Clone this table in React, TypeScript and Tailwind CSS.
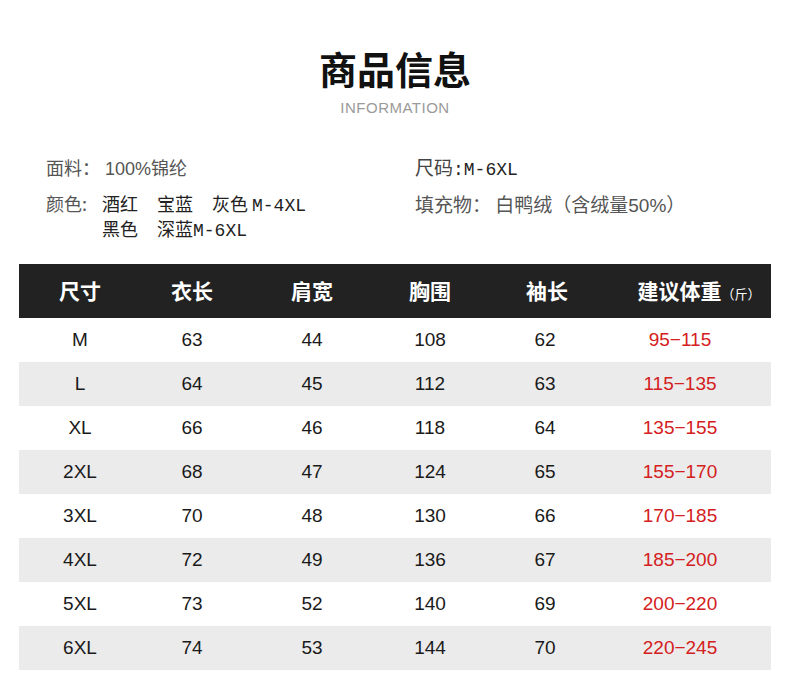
const rows = [
  ['M', '63', '44', '108', '62', '95−115'],
  ['L', '64', '45', '112', '63', '115−135'],
  ['XL', '66', '46', '118', '64', '135−155'],
  ['2XL', '68', '47', '124', '65', '155−170'],
  ['3XL', '70', '48', '130', '66', '170−185'],
  ['4XL', '72', '49', '136', '67', '185−200'],
  ['5XL', '73', '52', '140', '69', '200−220'],
  ['6XL', '74', '53', '144', '70', '220−245'],
];

const cols = 'grid grid-cols-[122px_102px_138px_98px_136px_156px]';
const cjk = "font-['Noto_Sans_CJK_SC',sans-serif]";
const mono = "font-['Liberation_Mono','Noto_Sans_CJK_SC',monospace]";

function Gap() {
  return <span className="inline-block w-[19px]" />;
}

export default function App() {
  return (
    <div className="w-[790px] h-[687px] bg-white overflow-hidden">
      <h1 className={`mt-[49px] h-[38px] text-center text-[38px] leading-[38px] font-bold text-[#111] ${cjk}`}>
        商品信息
      </h1>
      <p className="mt-[13px] text-center text-[15px] leading-[15px] tracking-[0.5px] text-[#9a9a9a] font-['Liberation_Sans',sans-serif]">
        INFORMATION
      </p>

      <div className={`mt-[40px] h-[109px] grid grid-cols-[369px_1fr] content-start pl-[46px] ${cjk}`}>
        <div className="h-[24px] text-[18px] leading-[24px] text-[#555]">
          面料：<span className="font-['Liberation_Sans','Noto_Sans_CJK_SC',sans-serif]"> 100%</span>锦纶
        </div>
        <div className="h-[24px] text-[19px] leading-[24px] text-[#444]">
          尺码<span className={`${mono} text-[#222] text-[18px]`}>:M-6XL</span>
        </div>

        <div className="mt-[12px] flex text-[18px]">
          <span className="w-[56px] h-[25px] leading-[25px] text-[#555]">颜色:</span>
          <div className="text-[#222]">
            <div className="h-[25px] leading-[25px]">
              酒红<Gap />宝蓝<Gap />灰色<span className={`${mono} ml-[4px]`}>M-4XL</span>
            </div>
            <div className="h-[25px] leading-[25px]">
              黑色<Gap />深蓝<span className={mono}>M-6XL</span>
            </div>
          </div>
        </div>
        <div className="mt-[12px] h-[25px] text-[19px] leading-[25px] text-[#555]">
          填充物： 白鸭绒（含绒量<span className="font-['Liberation_Sans',sans-serif]">50%</span>）
        </div>
      </div>

      <div className="ml-[19px] w-[752px]">
        <div className={`${cols} h-[54px] items-center bg-[#222] text-white text-[21px] font-semibold ${cjk}`}>
          <div className="text-center">尺寸</div>
          <div className="text-center">衣长</div>
          <div className="text-center">肩宽</div>
          <div className="text-center">胸围</div>
          <div className="text-center">袖长</div>
          <div className="text-center pl-[12px]">
            建议体重<span className="text-[13px] font-normal">（斤）</span>
          </div>
        </div>
        {rows.map((r, i) => (
          <div
            key={r[0]}
            className={`${cols} h-[44px] items-center text-[19px] text-[#1a1a1a] font-['Liberation_Sans',sans-serif] ${
              i % 2 === 1 ? 'bg-[#ebebeb]' : 'bg-white'
            }`}
          >
            <div className="text-center">{r[0]}</div>
            <div className="text-center">{r[1]}</div>
            <div className="text-center">{r[2]}</div>
            <div className="text-center">{r[3]}</div>
            <div className="text-center pr-[4px]">{r[4]}</div>
            <div className="text-center pr-[26px] text-[#d42020]">{r[5]}</div>
          </div>
        ))}
      </div>
    </div>
  );
}
